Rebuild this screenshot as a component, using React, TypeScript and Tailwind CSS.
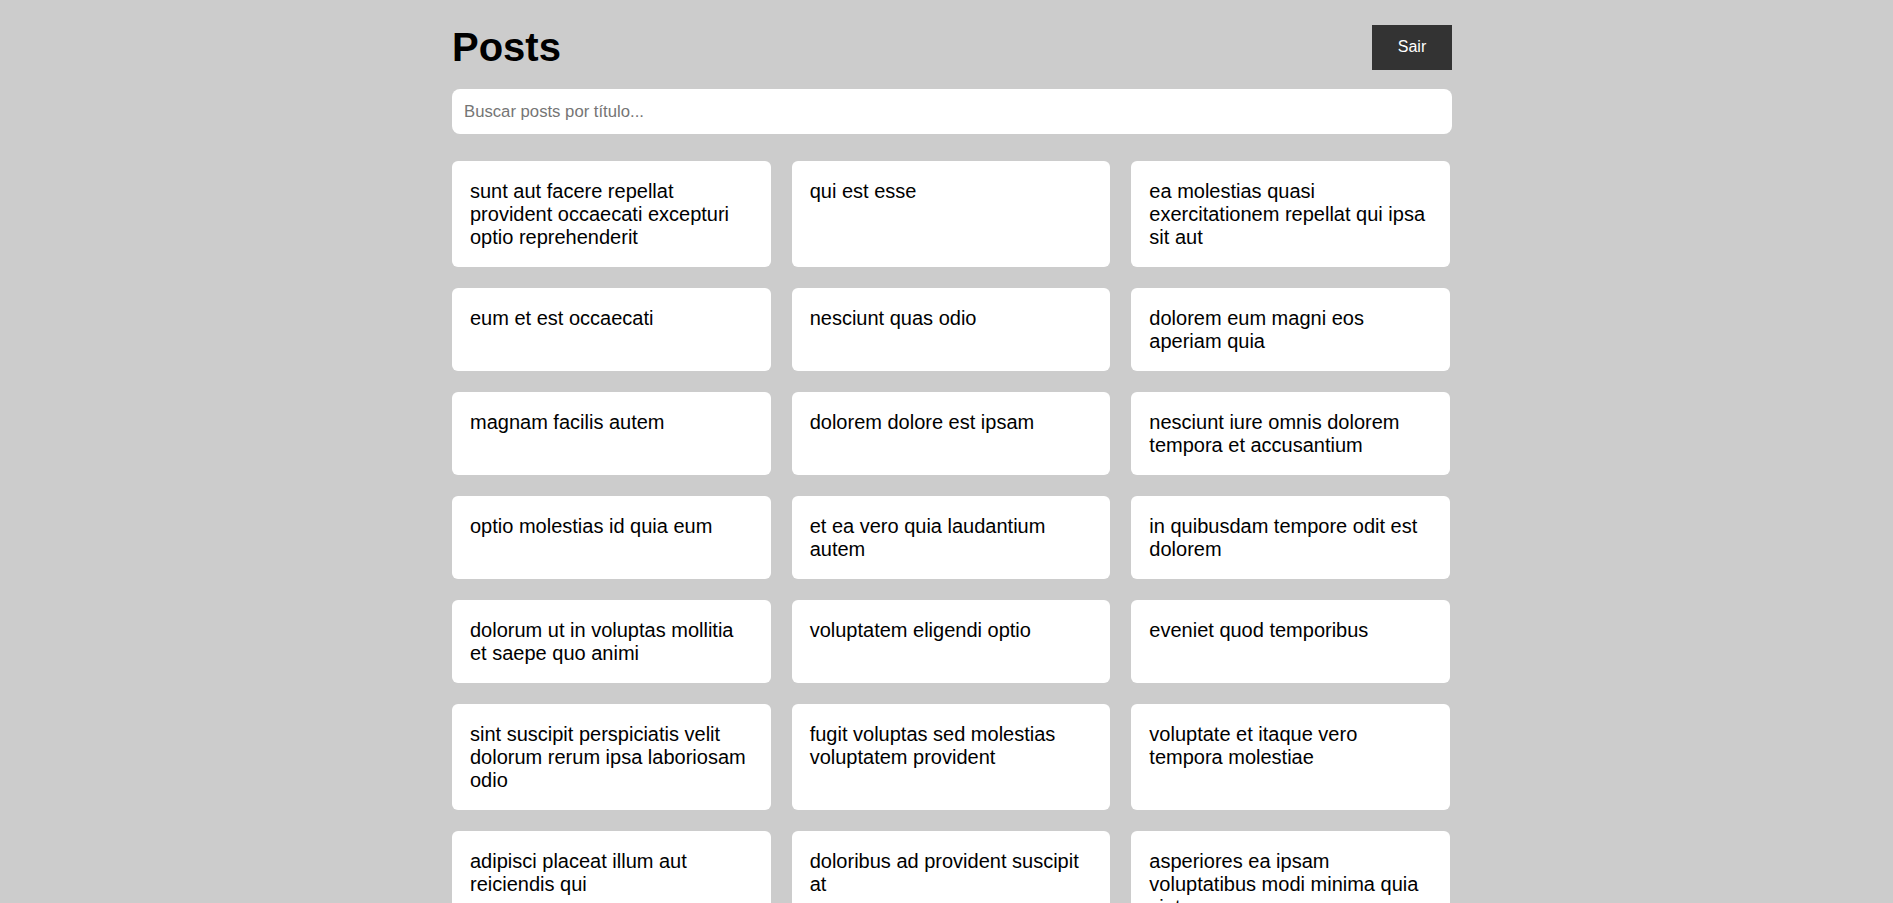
import { useState } from 'react';

const posts = [
  'sunt aut facere repellat provident occaecati excepturi optio reprehenderit',
  'qui est esse',
  'ea molestias quasi exercitationem repellat qui ipsa sit aut',
  'eum et est occaecati',
  'nesciunt quas odio',
  'dolorem eum magni eos aperiam quia',
  'magnam facilis autem',
  'dolorem dolore est ipsam',
  'nesciunt iure omnis dolorem tempora et accusantium',
  'optio molestias id quia eum',
  'et ea vero quia laudantium autem',
  'in quibusdam tempore odit est dolorem',
  'dolorum ut in voluptas mollitia et saepe quo animi',
  'voluptatem eligendi optio',
  'eveniet quod temporibus',
  'sint suscipit perspiciatis velit dolorum rerum ipsa laboriosam odio',
  'fugit voluptas sed molestias voluptatem provident',
  'voluptate et itaque vero tempora molestiae',
  'adipisci placeat illum aut reiciendis qui',
  'doloribus ad provident suscipit at',
  'asperiores ea ipsam voluptatibus modi minima quia sint',
  'dolor sint quo a velit explicabo quia nam',
  'maxime id vitae nihil numquam',
  'autem hic labore sunt dolores incidunt',
  'rem alias distinctio quo quis',
  'est et quae odit qui non',
  'quasi id et eos tenetur aut quo autem',
  'delectus ullam et corporis nulla voluptas sequi',
  'iusto eius quod necessitatibus culpa ea',
  'a quo magni similique perferendis',
];

export default function App() {
  const [search, setSearch] = useState('');
  const filtered = posts.filter((p) => p.toLowerCase().includes(search.toLowerCase()));

  return (
    <div className="min-h-screen bg-[#cccccc] font-['Liberation_Sans',Arial,sans-serif] text-black">
      <div className="flex justify-center pl-[11px] pt-[24px] pb-10">
        <div className="w-[1000px]">
          <div className="flex items-center justify-between">
            <h1 className="text-[40px] font-bold leading-[46px]">Posts</h1>
            <button className="h-[45px] w-[80px] bg-[#333333] text-base text-white">Sair</button>
          </div>
          <input
            value={search}
            onChange={(e) => setSearch(e.target.value)}
            placeholder="Buscar posts por título..."
            className="mt-[19px] h-[45px] w-full rounded-lg bg-white px-3 text-[16.7px] outline-none placeholder:text-[#757575]"
          />
          <div className="mt-[27px] grid w-[998px] grid-cols-3 gap-[21px]">
            {filtered.map((title) => (
              <div key={title} className="rounded-md bg-white px-[18px] pt-[19px] pb-[18px]">
                <h3 className="text-[20px] leading-[23px]">{title}</h3>
              </div>
            ))}
          </div>
        </div>
      </div>
    </div>
  );
}
